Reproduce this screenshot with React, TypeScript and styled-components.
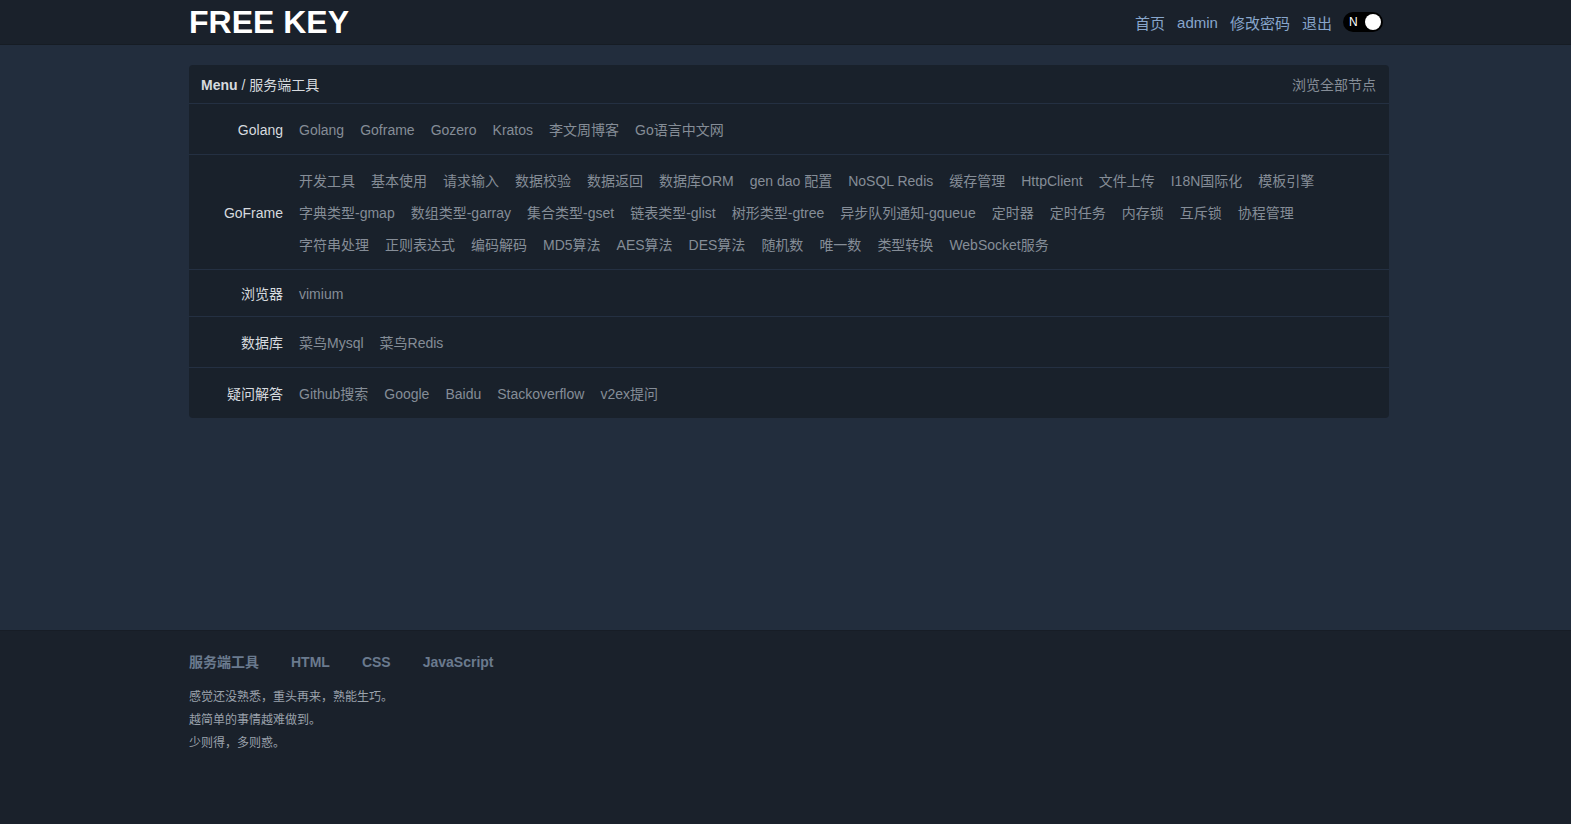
import React from "react";
import styled, { createGlobalStyle } from "styled-components";

const Global = createGlobalStyle`
  html, body { margin: 0; padding: 0; }
  body {
    background: #222d3d;
    font-family: "Liberation Sans", Arial, "Noto Sans CJK SC", sans-serif;
    color: #c9ced4;
  }
  a { text-decoration: none; }
`;

const Header = styled.header`
  height: 45px;
  background: #1a212b;
  border-bottom: 1px solid #161c24;
  box-sizing: border-box;
`;

const Container = styled.div`
  width: 1200px;
  margin-left: calc(50% - 596.5px);
  box-sizing: border-box;
`;

const HeaderInner = styled(Container)`
  height: 100%;
  display: flex;
  align-items: center;
  justify-content: space-between;
  padding-right: 6px;
`;

const Logo = styled.a`
  font-size: 32px;
  font-weight: bold;
  color: #ffffff;
  line-height: 1;
  margin-top: -1px;
`;

const Nav = styled.nav`
  display: flex;
  align-items: center;
  gap: 12px;
`;

const NavLink = styled.a`
  font-size: 15px;
  color: #88a6cb;
`;

const Toggle = styled.div`
  width: 40px;
  height: 20px;
  border-radius: 10px;
  background: #000;
  display: flex;
  align-items: center;
  justify-content: space-between;
  padding: 0 2px 0 6px;
  box-sizing: border-box;
  margin-left: -1px;
`;

const ToggleLabel = styled.span`
  font-size: 12px;
  color: #fff;
`;

const Knob = styled.span`
  width: 16px;
  height: 16px;
  border-radius: 50%;
  background: #fff;
`;

const Main = styled.main`
  min-height: 585px;
  padding-top: 20px;
  box-sizing: border-box;
`;

const Card = styled.section`
  background: #19212b;
  border-radius: 4px;
  overflow: hidden;
`;

const CardHead = styled.div`
  height: 38px;
  display: flex;
  align-items: center;
  justify-content: space-between;
  padding: 0 13px 0 12px;
  border-bottom: 1px solid #243042;
  font-size: 14px;
`;

const Crumb = styled.div`
  color: #d6dadf;
  b { font-weight: bold; }
`;

const AllNodes = styled.a`
  color: #858d97;
  font-size: 14px;
`;

const Row = styled.div<{ $pad: number; $last?: boolean }>`
  display: flex;
  align-items: center;
  padding: ${(p) => p.$pad + 1}px 0 ${(p) => p.$pad - 1}px;
  border-bottom: ${(p) => (p.$last ? "none" : "1px solid #243042")};
`;

const Label = styled.div`
  width: 94px;
  flex: none;
  text-align: right;
  font-size: 14px;
  color: #d6dadf;
  margin-right: 16px;
  line-height: 32px;
`;

const Links = styled.div`
  display: flex;
  flex-wrap: wrap;
  column-gap: 16px;
  flex: 1;
  padding-right: 60px;
`;

const Item = styled.a`
  font-size: 14px;
  line-height: 32px;
  color: #858d97;
  white-space: nowrap;
`;

const Footer = styled.footer`
  background: #1a212b;
  border-top: 1px solid #171d26;
  min-height: 194px;
  padding-top: 22px;
  box-sizing: border-box;
`;

const FootLinks = styled.div`
  display: flex;
  gap: 32px;
  margin-bottom: 15px;
`;

const FootLink = styled.a`
  font-size: 14px;
  font-weight: bold;
  line-height: 18px;
  color: #6a7a8e;
`;

const Saying = styled.p`
  margin: 0;
  font-size: 12px;
  line-height: 23px;
  color: #9aa2ab;
`;

type Group = { label: string; pad: number; items: string[] };

const groups: Group[] = [
  { label: "Golang", pad: 9, items: ["Golang", "Goframe", "Gozero", "Kratos", "李文周博客", "Go语言中文网"] },
  {
    label: "GoFrame",
    pad: 9,
    items: [
      "开发工具", "基本使用", "请求输入", "数据校验", "数据返回", "数据库ORM", "gen dao 配置", "NoSQL Redis",
      "缓存管理", "HttpClient", "文件上传", "I18N国际化", "模板引擎",
      "字典类型-gmap", "数组类型-garray", "集合类型-gset", "链表类型-glist", "树形类型-gtree",
      "异步队列通知-gqueue", "定时器", "定时任务", "内存锁", "互斥锁", "协程管理",
      "字符串处理", "正则表达式", "编码解码", "MD5算法", "AES算法", "DES算法", "随机数", "唯一数",
      "类型转换", "WebSocket服务",
    ],
  },
  { label: "浏览器", pad: 7, items: ["vimium"] },
  { label: "数据库", pad: 9, items: ["菜鸟Mysql", "菜鸟Redis"] },
  { label: "疑问解答", pad: 9, items: ["Github搜索", "Google", "Baidu", "Stackoverflow", "v2ex提问"] },
];

export default function App() {
  return (
    <>
      <Global />
      <Header>
        <HeaderInner>
          <Logo>FREE KEY</Logo>
          <Nav>
            <NavLink>首页</NavLink>
            <NavLink>admin</NavLink>
            <NavLink>修改密码</NavLink>
            <NavLink>退出</NavLink>
            <Toggle>
              <ToggleLabel>N</ToggleLabel>
              <Knob />
            </Toggle>
          </Nav>
        </HeaderInner>
      </Header>
      <Main>
        <Container>
          <Card>
            <CardHead>
              <Crumb>
                <b>Menu</b> / 服务端工具
              </Crumb>
              <AllNodes>浏览全部节点</AllNodes>
            </CardHead>
            {groups.map((g, i) => (
              <Row key={g.label} $pad={g.pad} $last={i === groups.length - 1}>
                <Label>{g.label}</Label>
                <Links>
                  {g.items.map((it) => (
                    <Item key={it}>{it}</Item>
                  ))}
                </Links>
              </Row>
            ))}
          </Card>
        </Container>
      </Main>
      <Footer>
        <Container>
          <FootLinks>
            <FootLink>服务端工具</FootLink>
            <FootLink>HTML</FootLink>
            <FootLink>CSS</FootLink>
            <FootLink>JavaScript</FootLink>
          </FootLinks>
          <Saying>感觉还没熟悉，重头再来，熟能生巧。</Saying>
          <Saying>越简单的事情越难做到。</Saying>
          <Saying>少则得，多则惑。</Saying>
        </Container>
      </Footer>
    </>
  );
}
